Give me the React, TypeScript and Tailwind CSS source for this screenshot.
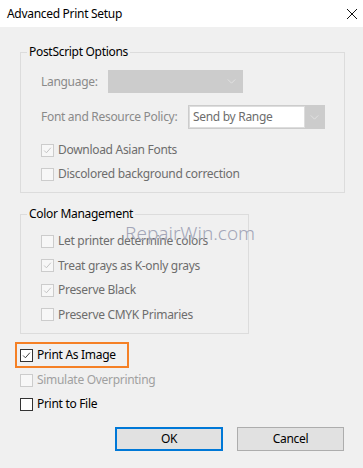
import React from 'react';

const Check = ({ color }: { color: string }) => (
  <svg viewBox="0 0 13 13" className="w-full h-full">
    <path d="M2.5 6.5 L5.2 9.2 L10.5 3.2" fill="none" stroke={color} strokeWidth="1.1" />
  </svg>
);

const Box = ({ checked, enabled }: { checked?: boolean; enabled?: boolean }) => (
  <span
    className={`w-[13px] h-[13px] shrink-0 border ${
      enabled ? 'border-[#333333] bg-white' : 'border-[#cccccc] bg-[#f7f7f7]'
    }`}
  >
    {checked && <Check color={enabled ? '#333333' : '#c0c0c0'} />}
  </span>
);

const Row = ({
  label,
  checked,
  enabled,
  tone,
  tall,
}: {
  label: string;
  checked?: boolean;
  enabled?: boolean;
  tone?: string;
  tall?: boolean;
}) => (
  <div className={`${tall ? 'h-[25px]' : 'h-[24px]'} flex items-center gap-[4px]`}>
    <Box checked={checked} enabled={enabled} />
    <span className={enabled ? 'text-black' : tone || 'text-[#6d6d6d]'}>{label}</span>
  </div>
);

const Chevron = ({ color }: { color: string }) => (
  <svg viewBox="0 0 10 6" className="w-[9px] h-[5px]">
    <path d="M0.5 0.5 L5 5 L9.5 0.5" fill="none" stroke={color} strokeWidth="1" />
  </svg>
);

export default function App() {
  return (
    <div
      className="w-[363px] h-[468px] bg-[#f0f0f0] text-[12px] leading-[16px] tracking-[-0.3px] relative overflow-hidden"
      style={{ fontFamily: '"Segoe UI", "Noto Sans", "Open Sans", sans-serif' }}
    >
      {/* Title bar */}
      <div className="h-[27px] bg-white flex items-center justify-between pl-[7px] pr-[6px]">
        <span className="text-black">Advanced Print Setup</span>
        <svg viewBox="0 0 10 10" className="w-[10px] h-[10px]">
          <path d="M0 0 L10 10 M10 0 L0 10" stroke="#111" strokeWidth="1" />
        </svg>
      </div>

      <div className="pl-[20px] pr-[19px] pt-[17px]">
        {/* PostScript Options */}
        <fieldset className="border border-[#dcdcdc] w-[325px] pb-[6px]">
          <legend className="ml-[6px] px-[2px] text-black">PostScript Options</legend>
          <div className="pl-[20px]">
            <div className="mt-[10px] flex items-center h-[23px]">
              <span className="text-[#8a8a8a] w-[67px]">Language:</span>
              <div className="w-[135px] h-[23px] bg-[#cccccc] border border-[#cccccc] flex items-center justify-end pr-[6px]">
                <Chevron color="#e4e4e4" />
              </div>
            </div>
            <div className="mt-[12px] flex items-center h-[24px]">
              <span className="text-[#8a8a8a] w-[147px]">Font and Resource Policy:</span>
              <div className="w-[137px] h-[24px] border border-[#cccccc] bg-[#cccccc] flex">
                <div className="flex-1 bg-white border border-[#dddddd] flex items-center pl-[3px] text-[#6d6d6d]">
                  Send by Range
                </div>
                <div className="w-[19px] flex items-center justify-center">
                  <Chevron color="#e4e4e4" />
                </div>
              </div>
            </div>
            <div className="mt-[9px]">
              <Row label="Download Asian Fonts" checked />
              <Row label="Discolored background correction" />
            </div>
          </div>
        </fieldset>

        {/* Color Management */}
        <fieldset className="border border-[#dcdcdc] w-[229px] mt-[13px] pb-[6px]">
          <legend className="ml-[6px] px-[2px] text-black">Color Management</legend>
          <div className="pl-[20px] mt-[7px]">
            <Row label="Let printer determine colors" />
            <Row label="Treat grays as K-only grays" checked tall />
            <Row label="Preserve Black" checked />
            <Row label="Preserve CMYK Primaries" tall />
          </div>
        </fieldset>

        <div className="mt-[8px] ml-[-5px] w-[114px] h-[26px] border-2 border-[#f58025] flex items-center pl-[3px]">
          <Row label="Print As Image" checked enabled />
        </div>
        <Row label="Simulate Overprinting" tone="text-[#a0a0a0]" />
        <Row label="Print to File" enabled />

        <div className="mt-[11px] flex justify-end gap-[14px]">
          <button className="w-[108px] h-[24px] bg-[#e1e1e1] border-2 border-[#0078d7] text-black">OK</button>
          <button className="w-[107px] h-[24px] bg-[#e1e1e1] border border-[#adadad] text-black">Cancel</button>
        </div>
      </div>

      {/* watermark */}
      <span className="absolute left-[125px] top-[222px] text-[19px] leading-[22px] font-light tracking-normal text-[#a3a6b8] pointer-events-none">
        RepairWin.com
      </span>
    </div>
  );
}
